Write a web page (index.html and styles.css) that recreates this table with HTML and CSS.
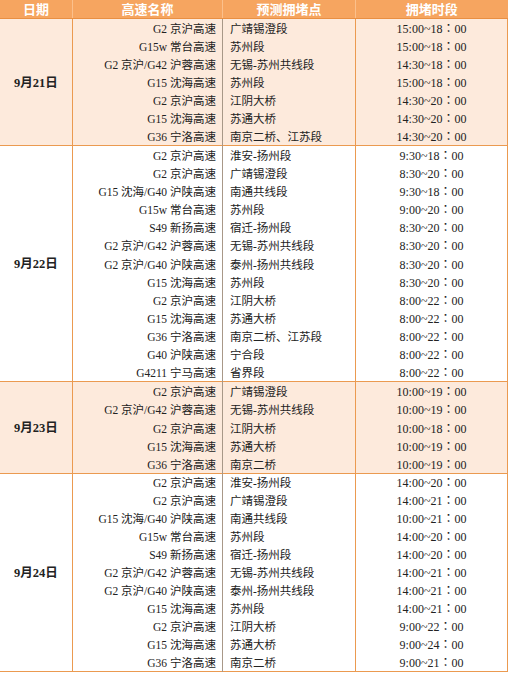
FILE: index.html
```html
<!DOCTYPE html>
<html lang="zh-CN">
<head>
<meta charset="utf-8">
<title>拥堵预测</title>
<link rel="stylesheet" href="styles.css">
</head>
<body>
<table class="jam">
<colgroup>
<col class="c-date"><col class="c-road"><col class="c-spot"><col class="c-time">
</colgroup>
<thead>
<tr><th>日期</th><th>高速名称</th><th>预测拥堵点</th><th>拥堵时段</th></tr>
</thead>
<tbody class="tint">
<tr class="tall"><td class="date" rowspan="7">9月21日</td><td class="road">G2 京沪高速</td><td class="spot">广靖锡澄段</td><td class="time">15:00~18：00</td></tr>
<tr><td class="road">G15w 常台高速</td><td class="spot">苏州段</td><td class="time">15:00~18：00</td></tr>
<tr><td class="road">G2 京沪/G42 沪蓉高速</td><td class="spot">无锡-苏州共线段</td><td class="time">14:30~18：00</td></tr>
<tr><td class="road">G15 沈海高速</td><td class="spot">苏州段</td><td class="time">15:00~18：00</td></tr>
<tr><td class="road">G2 京沪高速</td><td class="spot">江阴大桥</td><td class="time">14:30~20：00</td></tr>
<tr><td class="road">G15 沈海高速</td><td class="spot">苏通大桥</td><td class="time">14:30~20：00</td></tr>
<tr><td class="road">G36 宁洛高速</td><td class="spot">南京二桥、江苏段</td><td class="time">14:30~20：00</td></tr>
</tbody>
<tbody>
<tr class="tall"><td class="date" rowspan="13">9月22日</td><td class="road">G2 京沪高速</td><td class="spot">淮安-扬州段</td><td class="time">9:30~18：00</td></tr>
<tr><td class="road">G2 京沪高速</td><td class="spot">广靖锡澄段</td><td class="time">8:30~20：00</td></tr>
<tr><td class="road">G15 沈海/G40 沪陕高速</td><td class="spot">南通共线段</td><td class="time">9:30~18：00</td></tr>
<tr><td class="road">G15w 常台高速</td><td class="spot">苏州段</td><td class="time">9:00~20：00</td></tr>
<tr><td class="road">S49 新扬高速</td><td class="spot">宿迁-扬州段</td><td class="time">8:30~20：00</td></tr>
<tr><td class="road">G2 京沪/G42 沪蓉高速</td><td class="spot">无锡-苏州共线段</td><td class="time">8:30~20：00</td></tr>
<tr class="tall"><td class="road">G2 京沪/G40 沪陕高速</td><td class="spot">泰州-扬州共线段</td><td class="time">8:30~20：00</td></tr>
<tr><td class="road">G15 沈海高速</td><td class="spot">苏州段</td><td class="time">8:30~20：00</td></tr>
<tr><td class="road">G2 京沪高速</td><td class="spot">江阴大桥</td><td class="time">8:00~22：00</td></tr>
<tr><td class="road">G15 沈海高速</td><td class="spot">苏通大桥</td><td class="time">8:00~22：00</td></tr>
<tr><td class="road">G36 宁洛高速</td><td class="spot">南京二桥、江苏段</td><td class="time">8:00~22：00</td></tr>
<tr><td class="road">G40 沪陕高速</td><td class="spot">宁合段</td><td class="time">8:00~22：00</td></tr>
<tr><td class="road">G4211 宁马高速</td><td class="spot">省界段</td><td class="time">8:00~22：00</td></tr>
</tbody>
<tbody class="tint">
<tr class="tall"><td class="date" rowspan="5">9月23日</td><td class="road">G2 京沪高速</td><td class="spot">广靖锡澄段</td><td class="time">10:00~19：00</td></tr>
<tr><td class="road">G2 京沪/G42 沪蓉高速</td><td class="spot">无锡-苏州共线段</td><td class="time">10:00~19：00</td></tr>
<tr class="tall"><td class="road">G2 京沪高速</td><td class="spot">江阴大桥</td><td class="time">10:00~18：00</td></tr>
<tr><td class="road">G15 沈海高速</td><td class="spot">苏通大桥</td><td class="time">10:00~19：00</td></tr>
<tr><td class="road">G36 宁洛高速</td><td class="spot">南京二桥</td><td class="time">10:00~19：00</td></tr>
</tbody>
<tbody>
<tr><td class="date" rowspan="11">9月24日</td><td class="road">G2 京沪高速</td><td class="spot">淮安-扬州段</td><td class="time">14:00~20：00</td></tr>
<tr><td class="road">G2 京沪高速</td><td class="spot">广靖锡澄段</td><td class="time">14:00~21：00</td></tr>
<tr><td class="road">G15 沈海/G40 沪陕高速</td><td class="spot">南通共线段</td><td class="time">10:00~21：00</td></tr>
<tr><td class="road">G15w 常台高速</td><td class="spot">苏州段</td><td class="time">14:00~20：00</td></tr>
<tr><td class="road">S49 新扬高速</td><td class="spot">宿迁-扬州段</td><td class="time">14:00~20：00</td></tr>
<tr><td class="road">G2 京沪/G42 沪蓉高速</td><td class="spot">无锡-苏州共线段</td><td class="time">14:00~21：00</td></tr>
<tr><td class="road">G2 京沪/G40 沪陕高速</td><td class="spot">泰州-扬州共线段</td><td class="time">14:00~21：00</td></tr>
<tr><td class="road">G15 沈海高速</td><td class="spot">苏州段</td><td class="time">14:00~21：00</td></tr>
<tr><td class="road">G2 京沪高速</td><td class="spot">江阴大桥</td><td class="time">9:00~22：00</td></tr>
<tr><td class="road">G15 沈海高速</td><td class="spot">苏通大桥</td><td class="time">9:00~24：00</td></tr>
<tr><td class="road">G36 宁洛高速</td><td class="spot">南京二桥</td><td class="time">9:00~21：00</td></tr>
</tbody>
</table>
</body>
</html>
```
FILE: styles.css
```css
html, body {
  margin: 0;
  padding: 0;
  background: #ffffff;
}
.jam {
  width: 508px;
  table-layout: fixed;
  border-collapse: collapse;
  font-family: "Liberation Serif", "Noto Sans CJK SC", serif;
  font-size: 11.5px;
  color: #222222;
  margin-left: -1px;
}
.c-date { width: 73px; }
.c-road { width: 150px; }
.c-spot { width: 133px; }
.c-time { width: 152px; }
.jam th {
  background: #f6a560;
  color: #ffffff;
  font-family: "Noto Sans CJK SC", sans-serif;
  font-weight: bold;
  font-size: 13px;
  height: 18px;
  padding: 0;
  line-height: 18px;
  border-left: 1px solid #fbc08c;
  border-bottom: 1px solid #e98f42;
  text-align: center;
}
.jam th:first-child { border-left: 1px solid #f6a560; }
.jam tbody {
  border-top: 1px solid #eb9a50;
  border-bottom: 1px solid #eb9a50;
}
.jam tbody.tint { background: #fdeadc; }
.jam tr { height: 18px; }
.jam tr.tall { height: 19px; }
.jam td {
  padding: 1px 0 0;
  line-height: 16px;
  white-space: nowrap;
}
.jam td.date {
  text-align: center;
  font-weight: bold;
  font-size: 12.5px;
  border-right: 1px solid #eb9a50;
  border-left: 1px solid #eb9a50;
}
.jam td.road {
  text-align: right;
  padding-right: 6px;
  border-right: 1px solid #a89888;
}
.jam td.spot {
  text-align: left;
  padding-left: 7px;
  border-right: 1px solid #eb9a50;
}
.jam td.time {
  text-align: center;
  font-size: 12px;
  font-family: "Liberation Serif", "Noto Sans CJK JP", serif;
  border-right: 1px solid #eb9a50;
}
```
